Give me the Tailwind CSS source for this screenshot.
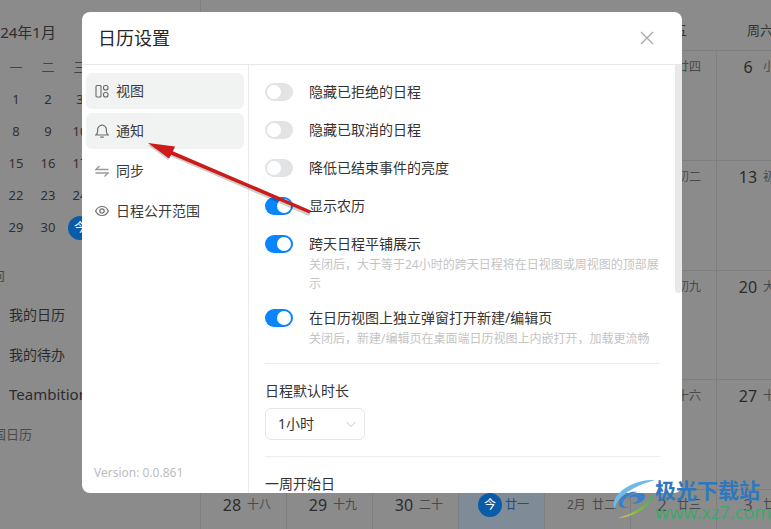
<!DOCTYPE html>
<html><head><meta charset="utf-8">
<script src="https://cdn.jsdelivr.net/npm/@tailwindcss/browser@4"></script>
</head>
<body class="m-0">
<div class="relative w-[771px] h-[529px] overflow-hidden flex bg-[#8b8b8b] text-[#262626] font-['Noto_Sans','Noto_Sans_CJK_SC',sans-serif]">
  <!-- background: left column -->
  <aside class="w-[201px] shrink-0 border-r border-[#7f7f7f] overflow-hidden">
    <div class="h-[64px] flex items-center -ml-[17px] text-[15px] text-[#2e2e2e] whitespace-nowrap">2024年1月</div>
    <div class="grid grid-cols-[repeat(3,32px)] auto-rows-[32px] items-center justify-items-center text-[13px] text-[#303030] -mt-[12px]">
      <span class="text-[#444]">一</span><span class="text-[#444]">二</span><span class="text-[#444]">三</span>
      <span>1</span><span>2</span><span>3</span>
      <span>8</span><span>9</span><span>10</span>
      <span>15</span><span>16</span><span>17</span>
      <span>22</span><span>23</span><span>24</span>
      <span>29</span><span>30</span><span class="w-[24px] h-[24px] rounded-full bg-[#0a5ca8] text-white flex items-center justify-center text-[12px]">今</span>
    </div>
    <div class="text-[13px] text-[#444] -ml-[8px] mt-[22px] h-[28px]">向</div>
    <div class="pl-[9px] text-[14px] text-[#2b2b2b] flex flex-col">
      <div class="h-[40px] flex items-center">我的日历</div>
      <div class="h-[40px] flex items-center">我的待办</div>
      <div class="h-[40px] flex items-center text-[15px]">Teambition</div>
    </div>
    <div class="text-[13px] text-[#4a4a4a] -ml-[20px] h-[40px] mt-[1px] flex items-center">中国日历</div>
  </aside>
  <!-- background: calendar -->
  <main class="flex-1 flex flex-col overflow-hidden">
    <div class="h-[51px] shrink-0 grid grid-cols-[repeat(7,86px)] text-[13px] text-[#333] items-center justify-items-center border-b border-[#7f7f7f] pt-[12px]">
      <span>周日</span><span>周一</span><span>周二</span><span>周三</span><span>周四</span><span>周五</span><span>周六</span>
    </div>
    <div class="grid grid-cols-[repeat(7,86px)] grid-rows-[110px_110px_109px_110px_39px] text-[#2b2b2b]">
      <div class="border-r border-b border-[#7f7f7f]"></div><div class="border-r border-b border-[#7f7f7f]"></div><div class="border-r border-b border-[#7f7f7f]"></div><div class="border-r border-b border-[#7f7f7f]"></div><div class="border-r border-b border-[#7f7f7f]"></div>
      <div class="border-r border-b border-[#7f7f7f] flex pl-[19px] gap-[3px] pt-[4px]"><span class="w-[24px] text-center text-[16px]">5</span><span class="text-[12px] leading-[24px] text-[#4a4a4a]">廿四</span></div>
      <div class="border-b border-[#7f7f7f] flex pl-[19px] gap-[3px] pt-[4px]"><span class="w-[24px] text-center text-[16px]">6</span><span class="text-[12px] leading-[24px] text-[#4a4a4a]">小寒</span></div>
      <div class="border-r border-b border-[#7f7f7f]"></div><div class="border-r border-b border-[#7f7f7f]"></div><div class="border-r border-b border-[#7f7f7f]"></div><div class="border-r border-b border-[#7f7f7f]"></div><div class="border-r border-b border-[#7f7f7f]"></div>
      <div class="border-r border-b border-[#7f7f7f] flex pl-[19px] gap-[3px] pt-[4px]"><span class="w-[24px] text-center text-[16px]">12</span><span class="text-[12px] leading-[24px] text-[#4a4a4a]">初二</span></div>
      <div class="border-b border-[#7f7f7f] flex pl-[19px] gap-[3px] pt-[4px]"><span class="w-[24px] text-center text-[16px]">13</span><span class="text-[12px] leading-[24px] text-[#4a4a4a]">初三</span></div>
      <div class="border-r border-b border-[#7f7f7f]"></div><div class="border-r border-b border-[#7f7f7f]"></div><div class="border-r border-b border-[#7f7f7f]"></div><div class="border-r border-b border-[#7f7f7f]"></div><div class="border-r border-b border-[#7f7f7f]"></div>
      <div class="border-r border-b border-[#7f7f7f] flex pl-[19px] gap-[3px] pt-[4px]"><span class="w-[24px] text-center text-[16px]">19</span><span class="text-[12px] leading-[24px] text-[#4a4a4a]">初九</span></div>
      <div class="border-b border-[#7f7f7f] flex pl-[19px] gap-[3px] pt-[4px]"><span class="w-[24px] text-center text-[16px]">20</span><span class="text-[12px] leading-[24px] text-[#4a4a4a]">大寒</span></div>
      <div class="border-r border-b border-[#7f7f7f]"></div><div class="border-r border-b border-[#7f7f7f]"></div><div class="border-r border-b border-[#7f7f7f]"></div><div class="border-r border-b border-[#7f7f7f]"></div><div class="border-r border-b border-[#7f7f7f]"></div>
      <div class="border-r border-b border-[#7f7f7f] flex pl-[19px] gap-[3px] pt-[4px]"><span class="w-[24px] text-center text-[16px]">26</span><span class="text-[12px] leading-[24px] text-[#4a4a4a]">十六</span></div>
      <div class="border-b border-[#7f7f7f] flex pl-[19px] gap-[3px] pt-[4px]"><span class="w-[24px] text-center text-[16px]">27</span><span class="text-[12px] leading-[24px] text-[#4a4a4a]">十七</span></div>
      <div class="border-r border-[#7f7f7f] flex pl-[19px] gap-[3px] pt-[3px]"><span class="w-[24px] text-center text-[16px]">28</span><span class="text-[12px] leading-[24px] text-[#4a4a4a]">十八</span></div>
      <div class="border-r border-[#7f7f7f] flex pl-[19px] gap-[3px] pt-[3px]"><span class="w-[24px] text-center text-[16px]">29</span><span class="text-[12px] leading-[24px] text-[#4a4a4a]">十九</span></div>
      <div class="border-r border-[#7f7f7f] flex pl-[19px] gap-[3px] pt-[3px]"><span class="w-[24px] text-center text-[16px]">30</span><span class="text-[12px] leading-[24px] text-[#4a4a4a]">二十</span></div>
      <div class="border-r border-[#7f7f7f] bg-[#7f8b97] flex pl-[19px] gap-[3px] pt-[3px]"><span class="w-[24px] h-[24px] rounded-full bg-[#0a5ca8] text-white flex items-center justify-center text-[12px]">今</span><span class="text-[12px] leading-[24px] text-[#1d4f80]">廿一</span></div>
      <div class="border-r border-[#7f7f7f] flex pl-[22px] gap-[6px] pt-[3px] text-[12px] text-[#4a4a4a] leading-[24px]"><span>2月</span><span>廿二</span></div>
      <div class="border-r border-[#7f7f7f] flex pl-[19px] gap-[3px] pt-[3px] text-[#4a4a4a]"><span class="w-[24px] text-center text-[16px]">2</span><span class="text-[12px] leading-[24px]">廿三</span></div>
      <div class="flex pl-[19px] gap-[3px] pt-[3px] text-[#4a4a4a]"><span class="w-[24px] text-center text-[16px]">3</span><span class="text-[12px] leading-[24px]">廿四</span></div>
    </div>
  </main>

  <!-- modal -->
  <section class="absolute left-[82px] top-[12px] w-[600px] h-[481px] bg-white rounded-[8px] overflow-hidden flex flex-col">
    <header class="h-[53px] shrink-0 border-b border-[#e8e8e8] flex items-center justify-between pl-[16px] pr-[27px]">
      <h1 class="text-[18px] text-[#262626] font-normal">日历设置</h1>
      <svg class="w-[16px] h-[16px]" viewBox="0 0 16 16" fill="none" stroke="#a8a8a8" stroke-width="1.3"><path d="M2 2l12 12M14 2L2 14"/></svg>
    </header>
    <div class="flex-1 flex min-h-0">
      <nav class="w-[167px] shrink-0 border-r border-[#ececec] pl-[4px] pr-[4px] pt-[8px] pb-[11px] flex flex-col text-[14px] text-[#3a3a3a]">
        <a class="h-[36px] rounded-[6px] bg-[#f1f3f3] flex items-center pl-[9px] gap-[7px] mb-[4px]">
          <svg class="w-[14px] h-[14px]" viewBox="0 0 14 14" fill="none" stroke="#666" stroke-width="1.1"><rect x="1" y="1.5" width="5" height="11.500" rx="1"/><rect x="8.500" y="1.500" width="4.500" height="4.500" rx="2"/><rect x="8.500" y="8.500" width="4.500" height="4.500" rx="2"/></svg>
          <span class="-translate-y-px">视图</span></a>
        <a class="h-[36px] rounded-[6px] bg-[#f1f3f3] flex items-center pl-[9px] gap-[7px] mb-[4px]">
          <svg class="w-[14px] h-[14px]" viewBox="0 0 14 14" fill="none" stroke="#707070" stroke-width="1.2"><path d="M0.800 11h12.400c-1.300-1-1.800-2-1.800-3.600V5.800A4.400 4.400 0 0 0 7 1.200 4.400 4.400 0 0 0 2.600 5.800v1.600C2.600 9 2.100 10 0.800 11zM5.200 13.200h3.600"/></svg>
          <span class="-translate-y-px">通知</span></a>
        <a class="h-[36px] rounded-[6px] flex items-center pl-[9px] gap-[7px] mb-[4px]">
          <svg class="w-[14px] h-[14px]" viewBox="0 0 14 14" fill="none" stroke="#9a9a9a" stroke-width="1.3"><path d="M13.500 5.500H1L4.500 2M0.500 9h12.500L9.500 12.500"/></svg>
          <span class="-translate-y-px">同步</span></a>
        <a class="h-[36px] rounded-[6px] flex items-center pl-[9px] gap-[7px]">
          <svg class="w-[14px] h-[14px]" viewBox="0 0 14 14" fill="none" stroke="#707070" stroke-width="1.2"><path d="M0.600 7C2 4 4.300 2.500 7 2.500S12 4 13.400 7C12 10 9.700 11.500 7 11.500S2 10 0.600 7z"/><circle cx="7" cy="7" r="2.200"/></svg>
          <span class="-translate-y-px">日程公开范围</span></a>
        <div class="mt-auto pl-[8px] text-[12px] text-[#bdbdbd]">Version: 0.0.861</div>
      </nav>
      <div class="relative flex-1 overflow-hidden pl-[16px] pr-[22px] pt-[17px] text-[14px] text-[#333]">
        <div class="absolute right-0 top-0 w-[7px] h-[228px] bg-[#e9e9e9] rounded-b-[4px]"></div>
        <div class="flex items-center gap-[16px] h-[20px] mb-[18px]"><span class="w-[28px] h-[18px] rounded-full bg-[#e2e3e4] flex items-center pl-[2px]"><i class="w-[14px] h-[14px] rounded-full bg-white"></i></span><span class="-translate-y-[1.500px]">隐藏已拒绝的日程</span></div>
        <div class="flex items-center gap-[16px] h-[20px] mb-[18px]"><span class="w-[28px] h-[18px] rounded-full bg-[#e2e3e4] flex items-center pl-[2px]"><i class="w-[14px] h-[14px] rounded-full bg-white"></i></span><span class="-translate-y-px">隐藏已取消的日程</span></div>
        <div class="flex items-center gap-[16px] h-[20px] mb-[18px]"><span class="w-[28px] h-[18px] rounded-full bg-[#e2e3e4] flex items-center pl-[2px]"><i class="w-[14px] h-[14px] rounded-full bg-white"></i></span><span class="-translate-y-px">降低已结束事件的亮度</span></div>
        <div class="flex items-center gap-[16px] h-[20px] mb-[18px]"><span class="w-[28px] h-[18px] rounded-full bg-[#0a84ff] flex items-center justify-end pr-[2px]"><i class="w-[14px] h-[14px] rounded-full bg-white"></i></span><span class="-translate-y-px">显示农历</span></div>
        <div class="flex items-center gap-[16px] h-[20px]"><span class="w-[28px] h-[18px] rounded-full bg-[#0a84ff] flex items-center justify-end pr-[2px]"><i class="w-[14px] h-[14px] rounded-full bg-white"></i></span><span class="-translate-y-px">跨天日程平铺展示</span></div>
        <p class="pl-[44px] text-[12px] leading-[19px] text-[#c4c4c4] mt-[1px] mb-[15px]">关闭后，大于等于24小时的跨天日程将在日视图或周视图的顶部展示</p>
        <div class="flex items-center gap-[16px] h-[20px]"><span class="w-[28px] h-[18px] rounded-full bg-[#0a84ff] flex items-center justify-end pr-[2px]"><i class="w-[14px] h-[14px] rounded-full bg-white"></i></span><span class="-translate-y-px">在日历视图上独立弹窗打开新建/编辑页</span></div>
        <p class="pl-[44px] text-[12px] leading-[19px] text-[#c4c4c4] mt-[1px]">关闭后，新建/编辑页在桌面端日历视图上内嵌打开，加载更流畅</p>
        <div class="border-t border-[#ececec] mt-[15px] pt-[17px]">
          <div class="leading-[20px]">日程默认时长</div>
          <div class="mt-[7px] w-[100px] h-[32px] border border-[#e6e6e6] rounded-[6px] flex items-center justify-between pl-[12px] pr-[7px]"><span class="-translate-y-px">1小时</span>
            <svg class="w-[12px] h-[12px]" viewBox="0 0 12 12" fill="none" stroke="#c4c4c4" stroke-width="1"><path d="M1.500 4L6 8.500 10.500 4"/></svg></div>
        </div>
        <div class="border-t border-[#ececec] mt-[16px] pt-[17px] leading-[20px]">一周开始日</div>
      </div>
    </div>
  </section>

  <!-- arrow annotation -->
  <svg class="absolute left-0 top-0 pointer-events-none" width="771" height="529" viewBox="0 0 771 529">
    <path d="M148 145 L175 148 L172 153 L311 212 L309 216 L170 156 L168 160z" fill="#000" fill-opacity="0.200"/>
    <path d="M148 143 L175 146.500 L172.800 151.200 L310.800 210.500 L309.400 213.500 L171.200 154.800 L169 158.500z" fill="#cd1b1b"/>
  </svg>

  <!-- watermark -->
  <div class="absolute left-[612px] top-[478px] flex items-start">
    <svg class="w-[44px] h-[41px] shrink-0" viewBox="0 0 44 41">
      <defs><linearGradient id="g" x1="1" y1="0" x2="0" y2="1"><stop offset="0" stop-color="#3fae5a"/><stop offset="0.600" stop-color="#7cbf3f"/><stop offset="1" stop-color="#e2cf4a"/></linearGradient></defs>
      <path d="M43 2C28 1 11 8 4 19c-3 5-3 9-1 12C3 22 17 9 43 2z" fill="#6fbbe8"/>
      <path d="M26 14C16 12 5 20 7 27c1 3 6 4 11 2-5 1-8-1-7-5 2-5 9-9 15-10z" fill="#3d7fc4"/>
      <path d="M15 21c5-3 10-3 11 0 0 2-3 4-7 4 6 2 13-1 14-6 1-4-6-5-11-3-3 1-6 3-7 5z" fill="#3d7fc4"/>
      <path d="M6 40c12 0 27-8 33-17 3-4 2-6 1-7-1 8-16 19-34 24z" fill="url(#g)"/>
    </svg>
    <div class="flex flex-col -ml-[1px]">
      <span class="text-[21px] leading-[24px] font-bold text-[#2f78bd] whitespace-nowrap">极光下载站</span>
      <span class="text-[18px] leading-[18px] mt-[1px] text-[#3fa86d] whitespace-nowrap">www.xz7.com</span>
    </div>
  </div>
</div>
</body></html>
